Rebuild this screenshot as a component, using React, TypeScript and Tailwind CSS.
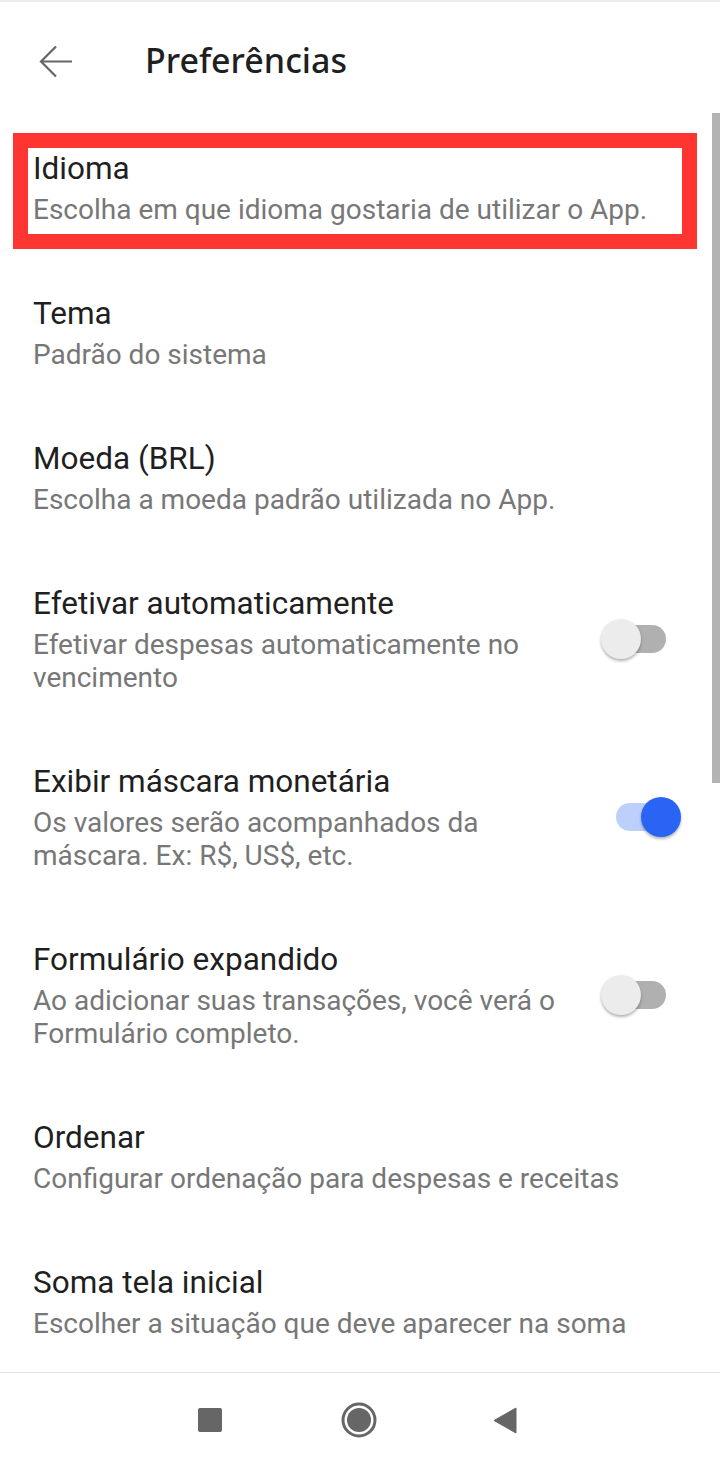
import React, { useState } from 'react';

type Pref = {
  title: string;
  subtitle: string;
  toggle?: boolean;
};

const prefs: Pref[] = [
  { title: 'Idioma', subtitle: 'Escolha em que idioma gostaria de utilizar o App.' },
  { title: 'Tema', subtitle: 'Padrão do sistema' },
  { title: 'Moeda (BRL)', subtitle: 'Escolha a moeda padrão utilizada no App.' },
  { title: 'Efetivar automaticamente', subtitle: 'Efetivar despesas automaticamente no vencimento', toggle: false },
  { title: 'Exibir máscara monetária', subtitle: 'Os valores serão acompanhados da máscara. Ex: R$, US$, etc.', toggle: true },
  { title: 'Formulário expandido', subtitle: 'Ao adicionar suas transações, você verá o Formulário completo.', toggle: false },
  { title: 'Ordenar', subtitle: 'Configurar ordenação para despesas e receitas' },
  { title: 'Soma tela inicial', subtitle: 'Escolher a situação que deve aparecer na soma' },
];

const Switch = ({ initial }: { initial: boolean }) => {
  const [on, setOn] = useState(initial);
  return (
    <button
      onClick={() => setOn(!on)}
      className={`relative flex items-center w-[80px] h-[40px] shrink-0 ml-[36px] mr-[39px] ${
        on ? 'justify-end' : 'justify-start'
      }`}
    >
      <span
        className={`absolute left-[15px] top-[6px] w-[50px] h-[28px] rounded-full ${
          on ? 'bg-[#bdd0fc]' : 'bg-[#b0b0b0]'
        }`}
      />
      <span
        className={`relative w-[40px] h-[40px] rounded-full shadow-[0_2px_3px_rgba(0,0,0,0.3)] ${
          on ? 'bg-[#2a64f4]' : 'bg-[#ececec]'
        }`}
      />
    </button>
  );
};

const PrefItem = ({ pref, highlight }: { pref: Pref; highlight?: boolean }) => (
  <div className="relative flex items-center pl-[33px] pt-[36px] pb-[32px]">
    <div className={`flex-1 ${pref.toggle === undefined ? 'pr-[33px]' : ''}`}>
      <p className="text-[31.5px] leading-[40px] text-[#1f1f1f]">{pref.title}</p>
      <p className="mt-[4px] text-[28px] leading-[33px] text-[#777777]">{pref.subtitle}</p>
    </div>
    {pref.toggle !== undefined && <Switch initial={pref.toggle} />}
    {highlight && (
      <div className="absolute left-[13px] top-[20px] w-[684px] h-[116px] border-[15px] border-[#fe3531]" />
    )}
  </div>
);

export default function App() {
  return (
    <div
      className="relative w-[720px] h-[1467px] bg-white overflow-hidden"
      style={{ fontFamily: 'Roboto, "Noto Sans", sans-serif' }}
    >
      <div className="h-[2px] bg-[#ececec]" />
      {/* Header */}
      <div className="h-[111px] pt-[38px]">
        <div className="flex items-center h-[40px]">
          <svg className="ml-[38px]" width="36" height="36" viewBox="0 0 36 36" fill="none">
            <path d="M34 19.5H3M18 4.5L3 19.5L18 34.5" stroke="#666666" strokeWidth="2.2" />
          </svg>
          <h1
            className="ml-[71px] text-[34px] leading-[40px] font-medium text-[#1f1f1f]"
            style={{ fontFamily: '"Noto Sans", "Open Sans", sans-serif' }}
          >
            Preferências
          </h1>
        </div>
      </div>

      {/* Scrollbar */}
      <div className="absolute right-0 top-[113px] w-[8px] h-[670px] bg-[#b3b3b3]" />

      {/* List */}
      <div>
        {prefs.map((p, i) => (
          <PrefItem key={p.title} pref={p} highlight={i === 0} />
        ))}
      </div>

      {/* Nav bar */}
      <div className="border-t border-[#e3e3e3] h-[95px] flex items-center">
        <div className="ml-[198px] w-[24px] h-[24px] rounded-[2px] bg-[#666666]" />
        <svg className="ml-[119px]" width="36" height="36" viewBox="0 0 36 36">
          <circle cx="18" cy="18" r="16" fill="none" stroke="#666666" strokeWidth="3" />
          <circle cx="18" cy="18" r="12" fill="#666666" />
        </svg>
        <svg className="ml-[116px]" width="24" height="27" viewBox="0 0 24 27">
          <path d="M23 1V26L1 13.5Z" fill="#666666" stroke="#666666" strokeWidth="1" strokeLinejoin="round" />
        </svg>
      </div>
    </div>
  );
}
